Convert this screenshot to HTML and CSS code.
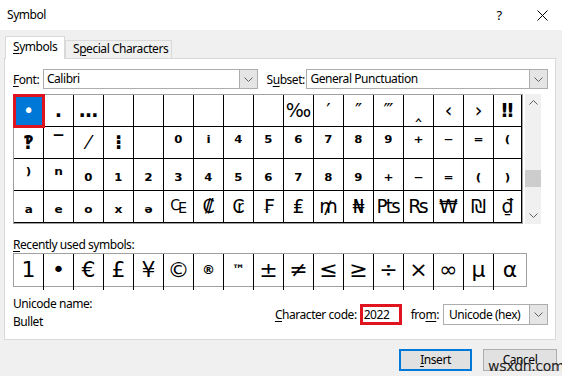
FILE: index.html
```html
<!DOCTYPE html>
<html>
<head>
<meta charset="utf-8">
<link rel="stylesheet" href="styles.css">
</head>
<body>
<div class="dialog">
  <div class="titlebar">
    <span class="title">Symbol</span>
    <span class="tb-btn">?</span>
    <span class="tb-btn"><svg width="11" height="11" viewBox="0 0 11 11"><path d="M0.5 0.5 L10.5 10.5 M10.5 0.5 L0.5 10.5" stroke="#000" stroke-width="1" fill="none"/></svg></span>
  </div>
  <div class="tabs">
    <div class="tab active"><u>S</u>ymbols</div>
    <div class="tab">S<u>p</u>ecial Characters</div>
  </div>
  <div class="panel">
    <div class="font-row">
      <span class="lbl-font"><u>F</u>ont:</span>
      <div class="combo combo-font"><span class="combo-text">Calibri</span><span class="dd"><svg width="9" height="5" viewBox="0 0 9 5"><path d="M0.5 0.5 L4.5 4.5 L8.5 0.5" stroke="#606060" fill="none"/></svg></span></div>
      <span class="lbl-subset">S<u>u</u>bset:</span>
      <div class="combo combo-subset"><span class="combo-text">General Punctuation</span><span class="dd"><svg width="9" height="5" viewBox="0 0 9 5"><path d="M0.5 0.5 L4.5 4.5 L8.5 0.5" stroke="#606060" fill="none"/></svg></span></div>
    </div>
    <div class="grid-area">
      <div class="grid">
        <span class="c sel">•</span><span class="c b">․</span><span class="c b">…</span><span class="c"></span><span class="c"></span><span class="c"></span><span class="c"></span><span class="c"></span><span class="c"></span><span class="c">‰</span><span class="c">′</span><span class="c">″</span><span class="c">‴</span><span class="c">‸</span><span class="c">‹</span><span class="c">›</span><span class="c b">‼</span>
        <span class="c b">‽</span><span class="c b">‾</span><span class="c">⁄</span><span class="c b">⁝</span><span class="c"></span><span class="c b">⁰</span><span class="c b">ⁱ</span><span class="c b">⁴</span><span class="c b">⁵</span><span class="c b">⁶</span><span class="c b">⁷</span><span class="c b">⁸</span><span class="c b">⁹</span><span class="c b">⁺</span><span class="c b">⁻</span><span class="c b">⁼</span><span class="c b">⁽</span>
        <span class="c b">⁾</span><span class="c b">ⁿ</span><span class="c b">₀</span><span class="c b">₁</span><span class="c b">₂</span><span class="c b">₃</span><span class="c b">₄</span><span class="c b">₅</span><span class="c b">₆</span><span class="c b">₇</span><span class="c b">₈</span><span class="c b">₉</span><span class="c b">₊</span><span class="c b">₋</span><span class="c b">₌</span><span class="c b">₍</span><span class="c b">₎</span>
        <span class="c b">ₐ</span><span class="c b">ₑ</span><span class="c b">ₒ</span><span class="c b">ₓ</span><span class="c b">ₔ</span><span class="c">₠</span><span class="c">₡</span><span class="c">₢</span><span class="c">₣</span><span class="c">₤</span><span class="c">₥</span><span class="c">₦</span><span class="c">₧</span><span class="c">₨</span><span class="c">₩</span><span class="c">₪</span><span class="c">₫</span>
      </div>
      <div class="sb">
        <span class="sb-btn"><svg width="9" height="5" viewBox="0 0 9 5"><path d="M0.5 4.5 L4.5 0.5 L8.5 4.5" stroke="#606060" fill="none"/></svg></span>
        <span class="sb-track"><span class="sb-thumb"></span></span>
        <span class="sb-btn"><svg width="9" height="5" viewBox="0 0 9 5"><path d="M0.5 0.5 L4.5 4.5 L8.5 0.5" stroke="#606060" fill="none"/></svg></span>
      </div>
    </div>
    <div class="recent-label"><u>R</u>ecently used symbols:</div>
    <div class="recent">
      <span class="r">1</span><span class="r">•</span><span class="r">€</span><span class="r">£</span><span class="r">¥</span><span class="r">©</span><span class="r"><span class="sm">®</span></span><span class="r"><span class="sm">™</span></span><span class="r">±</span><span class="r">≠</span><span class="r">≤</span><span class="r">≥</span><span class="r">÷</span><span class="r">×</span><span class="r">∞</span><span class="r">µ</span><span class="r">α</span>
    </div>
    <div class="bottom">
      <div class="uname">
        <div class="line">Unicode name:</div>
        <div class="line">Bullet</div>
      </div>
      <div class="code-group">
        <span class="lbl-code"><u>C</u>haracter code:</span>
        <span class="code-input">2022</span>
        <span class="lbl-from">fro<u>m</u>:</span>
        <div class="combo combo-from"><span class="combo-text">Unicode (hex)</span><span class="dd"><svg width="9" height="5" viewBox="0 0 9 5"><path d="M0.5 0.5 L4.5 4.5 L8.5 0.5" stroke="#606060" fill="none"/></svg></span></div>
      </div>
    </div>
  </div>
  <div class="buttons">
    <span class="btn btn-default"><u>I</u>nsert</span>
    <span class="btn">Cancel</span>
  </div>
  <span class="watermark">wsxdn.com</span>
</div>
</body>
</html>
```
FILE: styles.css
```css
* { box-sizing: border-box; }
body {
  margin: 0;
  width: 562px;
  height: 376px;
  overflow: hidden;
  background: #f0f0f0;
  font-family: "Noto Sans", "DejaVu Sans", sans-serif;
  font-size: 12px;
  letter-spacing: -0.45px;
  color: #000;
}
u { text-decoration: underline; text-underline-offset: 2px; }
.dialog {
  position: relative;
  width: 562px;
  height: 376px;
  display: flex;
  flex-direction: column;
}
.titlebar {
  height: 30px;
  background: #fff;
  display: flex;
  align-items: center;
  padding-left: 7px;
}
.title { flex: 1; font-size: 12px; line-height: 16px; }
.tb-btn {
  width: 46px;
  height: 30px;
  display: flex;
  align-items: center;
  justify-content: center;
  font-size: 13px;
}
.tb-btn:last-child { width: 40px; }
.tabs {
  display: flex;
  align-items: flex-end;
  margin-top: 6px;
  margin-left: 5px;
  height: 22px;
}
.tab {
  height: 18px;
  line-height: 16px;
  border: 1px solid #d9d9d9;
  border-bottom: none;
  background: #f0f0f0;
  padding: 0 7px;
  width: 107px;
  white-space: nowrap;
}
.tab.active {
  width: 60px;
  line-height: 20px;
  background: #fff;
  position: relative;
  z-index: 1;
  margin-bottom: -1px;
  height: 23px;
}
.panel {
  margin-left: 4px;
  width: 552px;
  height: 282px;
  background: #fff;
  border: 1px solid #d9d9d9;
  padding: 10px 7px 0 8px;
}
.font-row {
  display: flex;
  align-items: center;
  height: 20px;
}
.lbl-font { width: 30px; }
.lbl-subset { width: 40px; margin-left: 9px; }
.combo {
  height: 20px;
  border: 1px solid #adadad;
  display: flex;
  align-items: center;
  background: #fff;
}
.combo-text { flex: 1; padding-left: 3px; line-height: 16px; white-space: nowrap; }
.combo-font { width: 215px; }
.combo-subset { width: 242px; }
.dd {
  width: 18px;
  height: 100%;
  background: #e5e5e5;
  border-left: 1px solid #adadad;
  display: flex;
  align-items: center;
  justify-content: center;
}
.grid-area {
  display: flex;
  gap: 2px;
  margin-top: 5px;
}
.grid {
  display: grid;
  grid-template-columns: repeat(16, 30px) 28px;
  grid-auto-rows: 32px;
  width: 510px;
  border: 1px solid #a0a0a0;
  font-family: "DejaVu Sans", sans-serif;
  font-size: 19px;
  letter-spacing: 0;
}
.c {
  border-right: 1px solid #000;
  border-bottom: 1px solid #000;
  text-align: center;
  line-height: 31px;
  overflow: hidden;
  white-space: nowrap;
}
.c.b { font-weight: bold; }
.c.sel {
  background: #0078d7;
  color: #fff;
  outline: 3px solid #e0141e;
  outline-offset: -2px;
  position: relative;
  z-index: 2;
  overflow: visible;
}
.sb {
  width: 16px;
  height: 130px;
  background: #f0f0f0;
  display: flex;
  flex-direction: column;
}
.sb-btn {
  height: 17px;
  display: flex;
  align-items: center;
  justify-content: center;
}
.sb-track { flex: 1; padding-top: 59px; }
.sb-thumb { display: block; height: 17px; background: #cdcdcd; }
.recent-label {
  margin-top: 13px;
  line-height: 16px;
  height: 16px;
}
.recent {
  display: grid;
  grid-template-columns: repeat(16, 30px) 1fr;
  width: 514px;
  height: 34px;
  border: 1px solid #a0a0a0;
  font-family: "DejaVu Sans", sans-serif;
  font-size: 22px;
  letter-spacing: 0;
}
.r {
  border-right: 1px solid #000;
  text-align: center;
  line-height: 32px;
  white-space: nowrap;
}
.r:last-child { border-right: none; }
.sm { font-size: 13px; vertical-align: 7px; font-weight: bold; }
.bottom {
  display: flex;
  align-items: flex-start;
  margin-top: 9px;
}
.uname { display: flex; flex-direction: column; gap: 2px; }
.line { line-height: 16px; }
.code-group {
  margin-left: auto;
  margin-top: 8px;
  display: flex;
  align-items: center;
  height: 21px;
}
.code-input {
  width: 42px;
  height: 21px;
  margin-left: 3px;
  border: 3px solid #e0141e;
  line-height: 15px;
  padding-left: 1px;
}
.lbl-from { margin-left: 9px; }
.combo-from { width: 105px; height: 21px; margin-left: 4px; }
.combo-from .combo-text { padding-left: 5px; }
.buttons {
  display: flex;
  justify-content: flex-end;
  gap: 11px;
  margin-top: 9px;
  padding-right: 5px;
}
.btn {
  width: 74px;
  height: 22px;
  background: #e1e1e1;
  border: 1px solid #adadad;
  text-align: center;
  line-height: 20px;
}
.btn-default {
  width: 73px;
  border: 2px solid #0078d7;
  line-height: 18px;
}
.watermark {
  position: absolute;
  left: 488px;
  top: 358px;
  font-size: 14px;
  line-height: 16px;
  color: #222;
  font-family: "DejaVu Sans", sans-serif;
  letter-spacing: -0.3px;
}
```
